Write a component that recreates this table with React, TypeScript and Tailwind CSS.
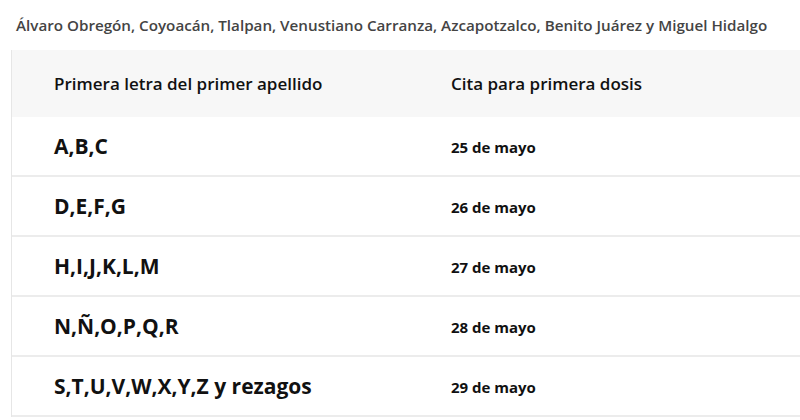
const rows = [
  { letters: 'A,B,C', date: '25 de mayo' },
  { letters: 'D,E,F,G', date: '26 de mayo' },
  { letters: 'H,I,J,K,L,M', date: '27 de mayo' },
  { letters: 'N,Ñ,O,P,Q,R', date: '28 de mayo' },
  { letters: 'S,T,U,V,W,X,Y,Z y rezagos', date: '29 de mayo' },
];

export default function App() {
  return (
    <div className="w-[800px] h-[420px] bg-white overflow-hidden" style={{ fontFamily: '"Open Sans", "Noto Sans", sans-serif' }}>
      <p className="pl-[16px] pt-[14px] h-[50px] text-[15.2px] font-semibold text-[#444] leading-[22px] whitespace-nowrap">
        Álvaro Obregón, Coyoacán, Tlalpan, Venustiano Carranza, Azcapotzalco, Benito Juárez y Miguel Hidalgo
      </p>
      <div className="ml-[11px] border-l border-[#e6e6e6]">
        <div className="flex h-[67px] items-center bg-[#f7f7f7] text-[17px] font-semibold text-[#111]">
          <div className="w-[439px] pl-[42px]">Primera letra del primer apellido</div>
          <div>Cita para primera dosis</div>
        </div>
        {rows.map(r => (
          <div key={r.date} className="flex h-[60px] items-center border-b-2 border-[#ececec]">
            <div className="w-[439px] pl-[42px] text-[21px] font-bold text-[#111] pt-[2px]">{r.letters}</div>
            <div className="text-[15px] font-bold text-[#111] pt-[2px]">{r.date}</div>
          </div>
        ))}
      </div>
    </div>
  );
}
